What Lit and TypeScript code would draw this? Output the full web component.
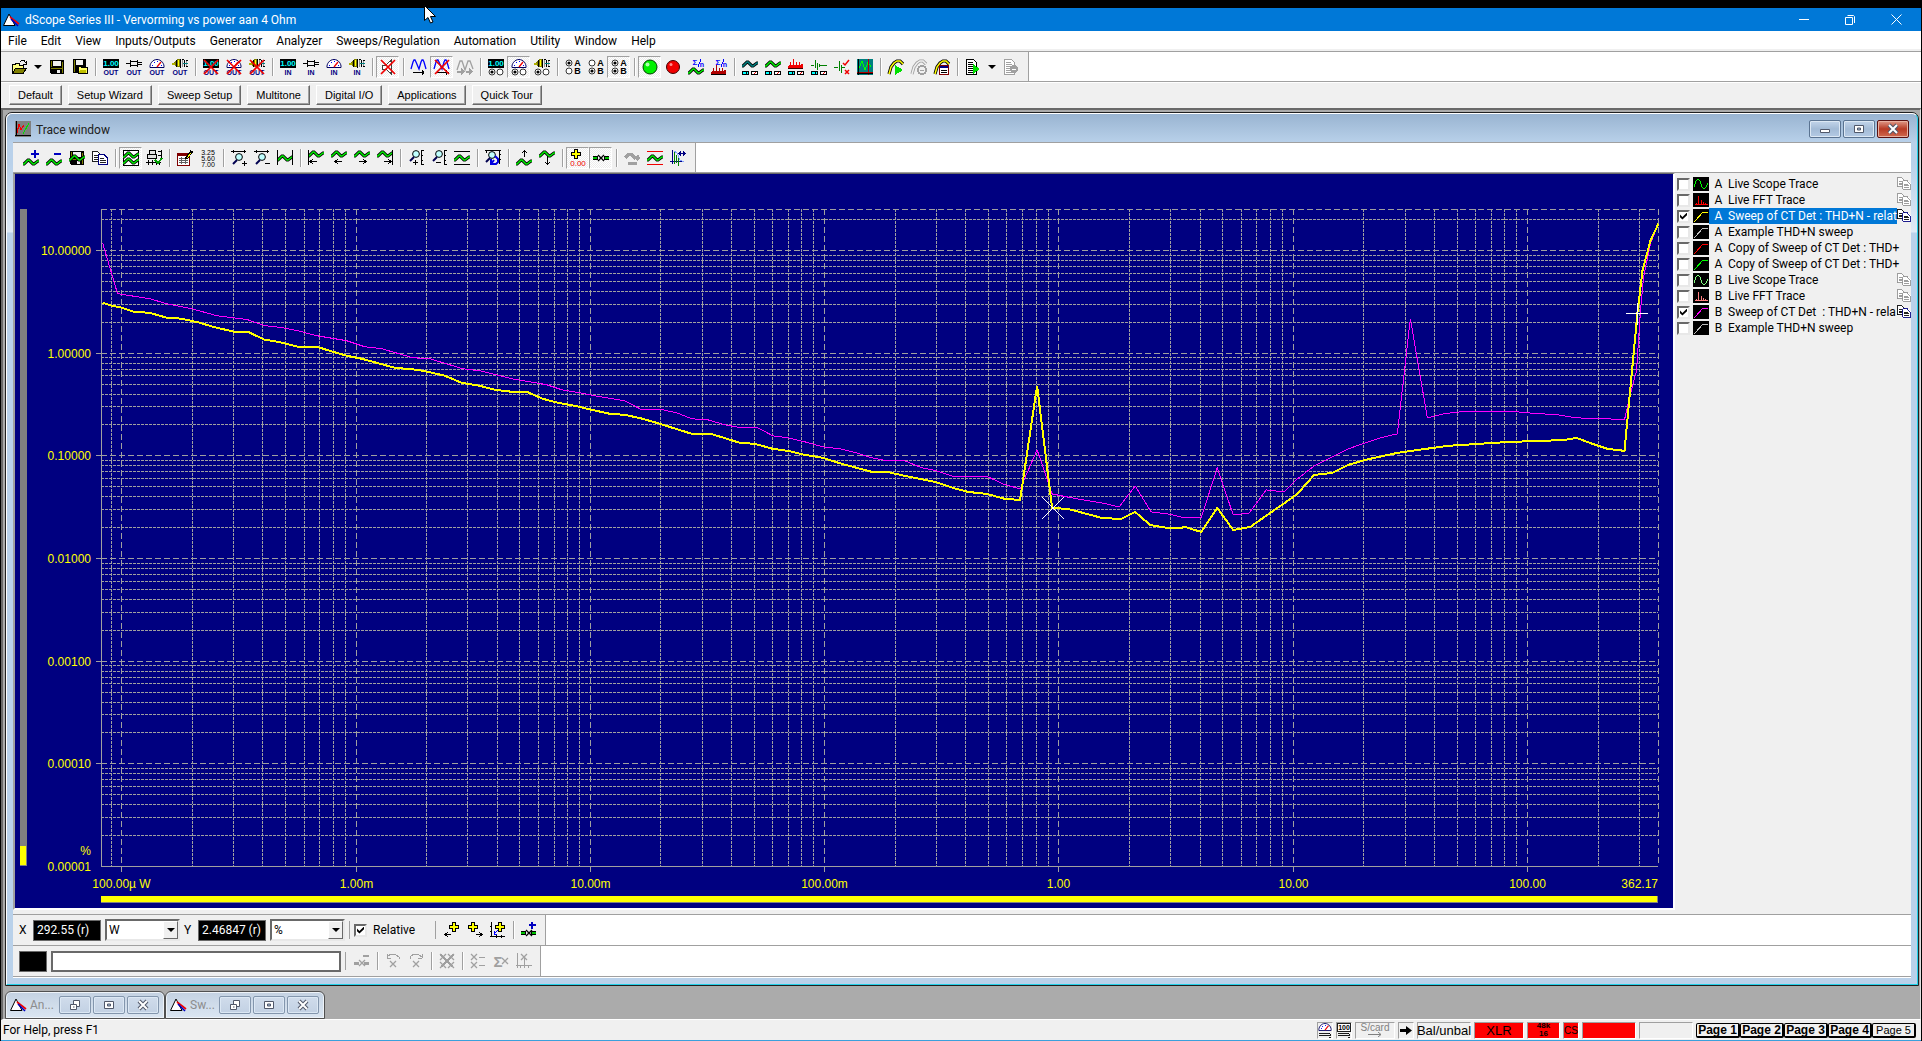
import { LitElement, html, svg, css, nothing, type TemplateResult } from "lit";
import { customElement, property, state } from "lit/decorators.js";
import { classMap } from "lit/directives/class-map.js";

type Glyph = TemplateResult;

/* ---------- icon building blocks, all on a 16 by 16 grid ---------- */

const stroke = (d: string, color: string, width = 1): Glyph =>
  svg`<path d=${d} fill="none" stroke=${color} stroke-width=${width}></path>`;
const fill = (d: string, color: string, edge = "none"): Glyph =>
  svg`<path d=${d} fill=${color} stroke=${edge}></path>`;
const word = (t: string, x: number, y: number, size: number, color: string, bold = false): Glyph =>
  svg`<text x=${x} y=${y} font-size=${size} fill=${color} text-anchor="middle"
    font-family="Liberation Sans, sans-serif" font-weight=${bold ? 700 : 400}>${t}</text>`;

const waveLine = (y: number) => `M0 ${y + 2}H1L5 ${y - 2}H6L10 ${y + 2}H11L15 ${y - 1}H16`;
const wave = (y: number, color = "#00f000"): Glyph =>
  svg`<g shape-rendering="auto">${stroke(waveLine(y), "#000", 3.2)}${stroke(waveLine(y), color, 1.5)}</g>`;
const cross = svg`<g shape-rendering="auto">${stroke("M1 1L15 15M15 1L1 15", "#f00000", 1.7)}</g>`;

const digits = svg`${fill("M0 0H16V9H0Z", "#000")}${word("1.00", 8, 7, 8, "#00ffff", true)}`;
const jack = svg`${stroke("M0 4.5H4M4.5 1V8M5 2.5H11M5 6.5H11M11.5 1V8M12 3.5H16M12 5.5H16", "#000")}`;
const gauge = svg`<g shape-rendering="auto">
  ${fill("M1 8.5C.5 5 3.500 .5 8 .5S15.500 5 15 8.5Z", "#fff", "#000060")}</g>
  ${stroke("M3 6.5H4M5 3.5H6M8 2.5H9M12 6.5H13", "#0000ff")}
  <g shape-rendering="auto">${stroke("M8 8L12 3", "#f00000", 1.3)}</g>`;
const gears = svg`
  ${fill("M2 3L5 0H8V8H5L2 6Z", "#808000")}
  ${fill("M0 4H3V6H0Z", "#b0b000")}
  ${stroke("M4.5 1V8M8.5 0V9M12.5 1V8M10 .5H12M14 1.5H16M14 7.5H16", "#000")}
  ${stroke("M6.5 1V7", "#ffff00")}
  ${stroke("M10.5 1V8M14.5 2V7", "#909090", 1)}
  ${stroke("M11 4.5H16", "#008080")}`;
const out = (g: Glyph) => svg`${g}${word("OUT", 8, 16, 7, "#000080", true)}`;
const input = (g: Glyph) => svg`${g}${word("IN", 8, 16, 7, "#000080", true)}`;

const radio = (x: number, y: number, on: boolean): Glyph => svg`
  <circle cx=${x} cy=${y} r="3" fill="#fff" stroke="#202020" stroke-width=".9" shape-rendering="auto"></circle>
  ${on ? svg`<circle cx=${x} cy=${y} r="1.6" fill="#000" shape-rendering="auto"></circle>` : nothing}`;
const abRadio = (a: boolean, b: boolean) => svg`
  ${radio(4, 4, a)}${radio(4, 12, b)}
  ${word("A", 12.5, 7, 9, "#000", true)}${word("B", 12.5, 15, 9, "#000", true)}`;
const withRadios = (g: Glyph) => svg`${g}${radio(4, 13, true)}${radio(12, 13, false)}`;

const lens = (x: number, y: number) => svg`<g shape-rendering="auto">
  <circle cx=${x} cy=${y} r="3.4" fill="#c0ffff" stroke="#000"></circle>
  ${stroke(`M${x - 2} ${y + 3}L${x - 6} ${y + 7}`, "#000050", 2)}</g>`;
const floppy = svg`
  ${fill("M1 1H15V15H2L1 14Z", "#000")}
  ${fill("M4 2H12V7H4Z", "#f0f0f0")}${fill("M2 2H3V8H2ZM13 3H14V14H13ZM2 9H14V10H2Z", "#808000")}
  ${fill("M8 11H11V14H8Z", "#f0f0f0")}`;
const copy = (ink: string, edge: string) => svg`
  ${fill("M.5 1.5H5.5L8.5 4.5V11.5H.5Z", "#fff", ink)}${stroke("M2 5.5H6M2 7.5H7M2 9.5H6", ink)}
  ${fill("M6.5 4.5H12L15.5 8V14.5H6.5Z", "#fff", edge)}${stroke("M8 8.5H12M8 10.5H14M8 12.5H14", ink)}`;
const meters = svg`
  ${fill("M.5 12.5H6.5V15.5H.5Z", "#00ffff", "#000")}
  ${fill("M9.5 12.5H15.5V15.5H9.5Z", "#fff", "#000")}${stroke("M12 15L14 13", "#f00000")}${stroke("M4.5 12V15", "#000")}`;
const star = (x: number, y: number, c: string) => svg`<g shape-rendering="auto">
  ${stroke(`M${x - 3} ${y - 3}L${x + 3} ${y + 3}M${x + 3} ${y - 3}L${x - 3} ${y + 3}`, c, 1.3)}</g>`;
const plus = (x: number, y: number) => svg`
  ${stroke(`M${x - 5} ${y}H${x + 5}M${x} ${y - 5}V${y + 5}`, "#000", 4)}
  ${stroke(`M${x - 4} ${y}H${x + 4}M${x} ${y - 4}V${y + 4}`, "#ffff00", 2)}`;
const sigmaN = svg`${word("Σ", 7, 6, 8, "#0000ff", true)}${stroke("M13 0L10 8", "#0000ff")}${word("n", 14, 8, 7, "#0000ff", true)}`;
const fft = (y: number, c: string) =>
  fill(`M0 ${y}V${y - 2}H1V${y - 3}H2V${y - 6}H3V${y - 3}H5V${y - 9}H6V${y - 3}H8V${y - 6}H9V${y - 3}H11V${y - 6}H12V${y - 3}H13V${y - 4}H15V${y}Z`, c);
const archLine = "M1 16L2 12L4 7L7 3L9 2H12L15 4M6 14L7 9L10 6H12";
const arch = (c: string, inner: string) => svg`<g shape-rendering="auto">${stroke("M1 15L3 8L6 4L9 2H12L15 5", c, 3.2)}${stroke("M1 15L3 8L6 4L9 2H12L15 5", inner, 1.5)}</g>`;
const sheet = (ink: string) => svg`
  ${fill("M1.5 .5H8.5L11.5 3.5V15.5H1.5Z", "#fff", ink)}
  ${stroke("M3 3.5H8M3 5.5H9M3 7.5H10M3 9.5H8M3 11.5H8M3 13.5H10", ink)}`;
const scope = stroke("M0 6.5H3M4.5 1V9M6.5 4V11M8.5 5V8M9 6.5H16", "#008000");
const GREY = "#a0a0a0";

const ICONS: Record<string, Glyph> = {
  open: svg`${fill("M1.5 14.5V5.5H4L5 4.5H8L9 6.5H12.5V14.5Z", "#ffff80", "#000")}
    ${fill("M1.5 14.5L4.5 9.5H15.5L12 14.5Z", "#808000", "#000")}${stroke("M9 2.5L11 1.5H13L15 4M15.5 2V5H12", "#000")}`,
  save: floppy,
  saveOpen: svg`${fill("M1 0H14V14H1Z", "#000")}${fill("M4 1H11V6H4Z", "#f0f0f0")}${fill("M2 1H3V13H2Z", "#808000")}
    ${fill("M6.5 14.5V7.5H9L10 8.5H15.5V14.5Z", "#ffff60", "#000")}${fill("M8 11H14V14H7Z", "#c0c000")}`,
  digitsOut: out(digits), jackOut: out(jack), gaugeOut: out(gauge), gearsOut: out(gears),
  digitsOff: svg`${out(digits)}${cross}`, gaugeOff: svg`${out(gauge)}${cross}`, gearsOff: svg`${out(gears)}${cross}`,
  digitsIn: input(digits), jackIn: input(jack), gaugeIn: input(gauge), gearsIn: input(gears),
  speaker: svg`${fill("M2.5 6V10H6L11.5 15V1L6 6Z", "#fff", "#404040")}${cross}`,
  sine: svg`<g shape-rendering="auto">${stroke("M0 10L2 3L3 1H4L5 3L8 10L10 3L11 1H12L13 3L15 10", "#0000ff", 1.3)}</g>${stroke("M2 13.5H13M11 11V16M12 12V15", "#000")}`,
  sineOff: svg`<g shape-rendering="auto">${stroke("M0 10L2 3L3 1H4L5 3L8 10L10 3L11 1H12L13 3L15 10", "#0000ff", 1.3)}</g>${stroke("M2 13.5H15M12 11V16", "#000")}${cross}`,
  sinePair: svg`<g shape-rendering="auto">${stroke("M0 11L3 2H5L8 11L11 2H13L16 10", GREY, 1.3)}</g>${fill("M0 12H4V9L8 13L4 16V14H0ZM9 12H12V9L16 13L12 16V14H9Z", GREY)}`,
  digitsSel: withRadios(digits), gaugeSel: withRadios(gauge), gearsSel: withRadios(gears),
  chanA: abRadio(true, false), chanB: abRadio(false, true), chanAB: abRadio(true, true),
  green: svg`<circle cx="8" cy="8" r="7" fill="#00f000" stroke="#004000" shape-rendering="auto"></circle>
    <circle cx="5.5" cy="5.5" r="2" fill="#b0ffb0" shape-rendering="auto"></circle>`,
  red: svg`<circle cx="8" cy="8" r="6.500" fill="#f00000" stroke="#400000" shape-rendering="auto"></circle>
    <circle cx="6" cy="5.5" r="1.500" fill="#ff9090" shape-rendering="auto"></circle>`,
  sumWave: svg`${wave(12)}${sigmaN}`,
  sumFft: svg`${fft(16, "#000")}${fft(15, "#b00000")}${sigmaN}`,
  traceTeal: svg`${wave(5, "#008080")}${meters}`,
  traceGreen: svg`${wave(5)}${meters}`,
  traceFft: svg`${fft(9, "#f00000")}${stroke("M0 9.5H15", "#400000")}${meters}`,
  traceScope: svg`${scope}${meters}`,
  limits: svg`${stroke("M0 8.5H4M5.5 2V12M7.5 6V14M8 8.5H11", "#008000")}<g shape-rendering="auto">${stroke("M9 4L11 6L15 1M11 11L15 15M15 11L11 15", "#f00000", 1.5)}</g>`,
  traceWin: svg`${fill("M0 0H16V16H0Z", "#008080")}${stroke("M2 9L5 2L8 11L11 3L14 8", "#00ff00")}${stroke("M11.5 0V16M0 13.5H16", "#b00000")}${stroke("M1.5 0V16M0 14.5H16", "#000")}`,
  run: svg`${arch("#000", "#ffff00")}${fill("M7 6L15 11L7 16Z", "#00e000")}`,
  stop: svg`${arch(GREY, "#f0f0f0")}<circle cx="11" cy="11" r="4" fill="#f0f0f0" stroke=${GREY} stroke-width="2"></circle>${stroke("M9 11.5H13", GREY)}`,
  script: svg`${arch("#000", "#ffff00")}${fill("M5.5 6.5H14.5V15.5H5.5Z", "#fff", "#800000")}${fill("M6 7H14V9H6Z", "#000080")}${stroke("M7 11.5H13M7 13.5H13", "#000")}`,
  report: svg`${sheet("#000")}${fill("M8 5L15 10L8 15Z", "#00e000")}`,
  reportOff: svg`${sheet(GREY)}<circle cx="11" cy="10" r="4" fill=${GREY}></circle>${stroke("M9 10.5H13", "#fff")}`,

  addWave: svg`${wave(12)}${stroke("M12 0V8M8 4H16", "#0000c0", 2)}`,
  delWave: svg`${wave(12)}${stroke("M8 4H15", "#0000c0", 2)}`,
  saveWave: svg`${floppy}${wave(8)}`,
  copy: copy("#202020", "#000080"),
  overlay: svg`${fill("M.5 .5H15.5V15.5H.5Z", "#fff", "#000")}${wave(5)}${wave(11)}`,
  print: svg`${fill("M3.5 4V.5H9.5V4M1 4.5H10.5V8.5H1Z", "#e0e0e0", "#000")}${stroke("M12 1.5H16M12 5.5H16M15.5 0V10M0 12.5H15M2.5 10V15M6.5 10V15M10.5 10V15M13.5 10V15", "#000")}${stroke("M9 10L12 13L16 8", "#00a000", 2)}`,
  table: svg`${fill("M.5 3.5H12.5V15.5H.5Z", "#fff", "#800000")}${fill("M0 3H13V6H0Z", "#800000")}${stroke("M2 8.5H11M2 10.5H11M2 12.5H11M4.5 7V14M8.5 7V14", "#606060")}${stroke("M9 9L15 1", "#000", 3)}${stroke("M10 8L14 3", "#ffff00")}`,
  numbers: svg`${word("3.25", 8, 5, 7, "#000")}${word("5.60", 8, 11, 7, "#000")}${word("7.00", 8, 17, 7, "#000")}`,
  zoomXIn: svg`${stroke("M0 1.5H15M2.5 0V3M13.5 0V3", "#000")}${lens(8, 7)}${stroke("M11 13.5H16M13.5 11V16", "#000")}`,
  zoomXOut: svg`${stroke("M0 1.5H15M2.5 0V3M13.5 0V3", "#000")}${lens(8, 7)}${stroke("M11 13.5H16", "#000")}`,
  fitX: svg`${wave(8)}${stroke("M.5 0V15M15.5 0V15", "#000")}`,
  goStart: svg`${wave(4)}${stroke("M.5 0V15M2 11.5H9M5 9L2 11.5L5 14", "#000")}`,
  goLeft: svg`${wave(4)}${stroke("M4 11.5H11M7 9L4 11.5L7 14", "#000")}`,
  goRight: svg`${wave(4)}${stroke("M5 11.5H12M9 9L12 11.5L9 14", "#000")}`,
  goEnd: svg`${wave(4)}${stroke("M15.5 0V15M7 11.5H14M11 9L14 11.5L11 14", "#000")}`,
  zoomYIn: svg`${lens(8, 4)}${stroke("M16 .5H13.5V14.5H16M13 5.5H15M13 10.5H15M5 12.5H10M7.5 10V15", "#000")}`,
  zoomYOut: svg`${lens(8, 4)}${stroke("M16 .5H13.5V14.5H16M13 5.5H15M13 10.5H15M5 12.5H10", "#000")}`,
  fitY: svg`${stroke("M0 1.5H16M0 14.5H16", "#000")}${wave(8)}`,
  unzoom: svg`${stroke("M0 .5H16M1.5 0V3M14.5 0V14M14 4.5H16M14 9.5H16", "#000")}${lens(7, 5)}<g shape-rendering="auto">${stroke("M6 9V14H11L13 12V9L10 6M6 14L9 10", "#0000e0", 2)}</g>`,
  shiftUp: svg`${wave(12)}${stroke("M8.5 0V7M6 3L8.5 1L11 3", "#000")}`,
  shiftDown: svg`${wave(4)}${stroke("M8.5 6V15M6 12L8.5 14L11 12", "#000")}`,
  readout: svg`${plus(6, 4)}${word("0.00", 8, 16, 8, "#f00000")}`,
  markers: svg`${stroke("M0 8H5M11 8H16", "#000", 4)}${stroke("M0 8H4M12 8H16", "#00c000", 2)}${star(8, 8, "#000")}`,
  link: svg`${stroke("M1 8L5 4H7L11 8L15 6M4 13H13M12 10L15 7", GREY, 3)}`,
  band: svg`${stroke("M0 1.5H16M0 14.5H16", "#f00000")}${wave(8)}`,
  windowed: svg`${stroke("M2.5 0V14M0 11.5H13", "#000080")}${stroke("M4.5 2V14M6.5 5V13M8.5 8V16", "#008000")}${stroke("M4 1L7 3L10 10L14 12", "#80a0ff")}${stroke("M8 3.5H16M9.5 2V5M10.5 1V6M13.5 1V6M14.5 2V5", "#000080")}`,

  curLeft: svg`${plus(10, 5)}${stroke("M1 12.5H7M4 10L1 12.5L4 15", "#000")}`,
  curRight: svg`${plus(6, 5)}${stroke("M9 12.5H15M12 10L15 12.5L12 15", "#000")}`,
  curSet: svg`${stroke("M1.5 0V15M0 14.5H15M0 4.5H2M0 9.5H2M6.5 13V16M11.5 13V16", "#000")}${plus(10, 5)}${stroke("M8 8L4 12M4 9V12H7", "#0000ff")}`,
  curMark: svg`${stroke("M11 0V7M8 3H15", "#0000c0", 2)}${stroke("M0 11H5M10 11H15", "#000", 4)}${stroke("M0 11H4M11 11H15", "#00c000", 2)}${star(8, 11, "#000")}`,
  mDel: svg`${stroke("M9 3H15", GREY, 2)}${stroke("M0 10H5M10 10H15", GREY, 3)}${star(8, 10, GREY)}`,
  mUndo: svg`${stroke("M2 5V1M2 5H6M2 4L6 1H10L14 4V6", GREY)}${star(8, 11, GREY)}`,
  mRedo: svg`${stroke("M14 5V1M14 5H10M14 4L10 1H6L2 4V6", GREY)}${star(8, 11, GREY)}`,
  mClear: svg`${star(4, 4, GREY)}${star(12, 4, GREY)}${star(4, 12, GREY)}${star(12, 12, GREY)}${stroke("M2 2L14 14M14 2L2 14", GREY, 2)}`,
  mList: svg`${star(4, 4, GREY)}${star(4, 12, GREY)}${stroke("M9 4.5H15M9 12.5H15", GREY)}`,
  mSum: svg`${word("Σ", 5, 14, 15, GREY, true)}${star(12, 8, GREY)}`,
  mAxis: svg`${stroke("M1.5 0V15M0 12.5H16M8.5 5V15M4.5 12V15M12.5 12V15", GREY)}${star(8, 4, GREY)}`,

  app: svg`<g shape-rendering="auto">${fill("M0.500 13.5L6 2L12 13.5Z", "#fff", "#000")}${stroke("M7 5L16 12", "#f00000", 1.6)}${stroke("M8 7L15 14", "#0000c0", 1.6)}</g>`,
  trace: svg`${fill("M0 0H16V16H0Z", "#808080")}${stroke("M2 12L4 3L6 9L9 4", "#f00000", 1)}${stroke("M8 13L14 2", "#00e000", 1)}${stroke("M1.5 0V15M0 14.5H16", "#000")}`,
};

const icon = (name: string): TemplateResult =>
  html`<svg class="ico" width="16" height="16" viewBox="0 0 16 16" shape-rendering="crispEdges" aria-hidden="true">${ICONS[name]}</svg>`;

type Tool = { id: string; label: string; on?: boolean; off?: boolean; menu?: boolean };
const t = (id: string, label: string, mode = ""): Tool => ({
  id, label, on: mode === "on", off: mode === "off", menu: mode === "menu",
});

const MAIN_TOOLS: Tool[][] = [
  [t("open", "Open", "menu"), t("save", "Save"), t("saveOpen", "Save as")],
  [t("digitsOut", "Output readings"), t("jackOut", "Outputs"), t("gaugeOut", "Output meters"), t("gearsOut", "Output setup")],
  [t("digitsOff", "Close readings"), t("gaugeOff", "Close meters"), t("gearsOff", "Close setup")],
  [t("digitsIn", "Input readings"), t("jackIn", "Inputs"), t("gaugeIn", "Input meters"), t("gearsIn", "Input setup")],
  [t("speaker", "Mute", "on")],
  [t("sine", "Generator"), t("sineOff", "Generator off", "on"), t("sinePair", "Both generators", "off")],
  [t("digitsSel", "Reading source"), t("gaugeSel", "Meter source", "on"), t("gearsSel", "Setup source")],
  [t("chanA", "Channel A"), t("chanB", "Channel B"), t("chanAB", "Channels A and B", "on")],
  [t("green", "Run", "on"), t("red", "Halt"), t("sumWave", "Average scope"), t("sumFft", "Average FFT")],
  [t("traceTeal", "Analyzer"), t("traceGreen", "Scope"), t("traceFft", "FFT"), t("traceScope", "Detector"), t("limits", "Limits"), t("traceWin", "Traces")],
  [t("run", "Run sweep"), t("stop", "Stop sweep", "off"), t("script", "Sweep setup")],
  [t("report", "Run script", "menu"), t("reportOff", "Stop script", "off")],
];

const TRACE_TOOLS: Tool[][] = [
  [t("addWave", "Add trace"), t("delWave", "Remove trace"), t("saveWave", "Save trace"), t("copy", "Copy trace")],
  [t("overlay", "Overlay", "on"), t("print", "Print")],
  [t("table", "Edit"), t("numbers", "Values")],
  [t("zoomXIn", "Zoom in X"), t("zoomXOut", "Zoom out X"), t("fitX", "Fit X")],
  [t("goStart", "Start"), t("goLeft", "Left"), t("goRight", "Right"), t("goEnd", "End")],
  [t("zoomYIn", "Zoom in Y"), t("zoomYOut", "Zoom out Y"), t("fitY", "Fit Y")],
  [t("unzoom", "Undo zoom")],
  [t("shiftUp", "Shift up"), t("shiftDown", "Shift down")],
  [t("readout", "Cursor", "on"), t("markers", "Marks", "on")],
  [t("link", "Link", "off"), t("band", "Limit lines"), t("windowed", "Window")],
];

const CURSOR_TOOLS: Tool[][] = [
  [t("curLeft", "Cursor left"), t("curRight", "Cursor right"), t("curSet", "Cursor to axes")],
  [t("curMark", "Add mark")],
];

const MARK_TOOLS: Tool[][] = [
  [t("mDel", "Delete mark", "off")],
  [t("mUndo", "Previous mark", "off"), t("mRedo", "Next mark", "off")],
  [t("mClear", "Clear marks", "off")],
  [t("mList", "List marks", "off"), t("mSum", "Sum marks", "off"), t("mAxis", "Mark axis", "off")],
];

@customElement("tool-strip")
class ToolStrip extends LitElement {
  @property({ attribute: false }) groups: Tool[][] = [];

  static styles = css`
    :host { display: flex; align-items: center; }
    .group { display: flex; align-items: center; }
    .group + .group::before {
      content: ""; width: 1px; height: 18px; margin: 0 3px 0 4px;
      background: #a0a0a0; box-shadow: 1px 0 #fff;
    }
    button {
      box-sizing: border-box; width: 23px; height: 22px; padding: 0; border: 1px solid transparent;
      background: none; display: flex; align-items: center; justify-content: center;
    }
    button.on {
      border-color: #a0a0a0 #fff #fff #a0a0a0;
      background: repeating-conic-gradient(#fff 0 25%, #ececec 0 50%) 0 0 / 2px 2px;
    }
    .ico { display: block; overflow: visible; }
    .menu { width: 15px; }
    .menu::after { content: ""; border: 4px solid transparent; border-top-color: #000; border-bottom: 0; }
  `;

  render() {
    return this.groups.map(
      (g) => html`<div class="group">${g.map(
        (b) => html`<button type="button" class=${classMap({ on: !!b.on })} aria-label=${b.label} ?disabled=${b.off}>${icon(b.id)}</button>
          ${b.menu ? html`<button type="button" class="menu" aria-label=${b.label + " list"}></button>` : nothing}`,
      )}</div>`,
    );
  }
}

/* ---------- plot ---------- */

const SPAN_X = 1556;
const SPAN_Y = 656;
const X_MIN = -4.0867;
const X_MAX = 2.5589;
const Y_MIN = -5;
const Y_MAX = 1.4;

const TRACE_A =
  "1,93 10,96 20,98 32,102 45,103 51,104 65,108 80,109 98,113 111,117 132,122 146,122 163,130 176,132 196,137 215,137 231,142 245,146 260,149 293,158 315,160 326,162 343,166 360,173 378,176 393,180 410,182 425,182 441,189 456,193 473,196 490,200 508,204 523,205 541,209 558,214 590,224 609,224 638,233 653,234 671,239 686,241 703,245 721,248 740,254 770,262 785,262 803,266 818,269 833,272 851,278 866,282 885,284 903,289 918,290 935,176 950,298 966,299 1000,308 1019,309 1033,302 1048,315 1066,318 1078,318 1083,317 1099,322 1115,298 1131,320 1148,317 1165,305 1181,294 1195,284 1212,265 1230,263 1246,255 1263,250 1295,243 1345,236 1408,232 1441,231 1463,230 1474,228 1490,234 1505,239 1522,241 1535,103 1540,61 1548,31 1556,14";
const TRACE_B =
  "1,33 16,84 22,85 35,87 48,89 65,94 90,99 115,106 131,108 146,110 163,116 181,118 196,121 215,126 245,131 263,137 280,139 311,148 328,149 361,159 378,161 410,169 428,172 445,175 460,180 478,183 493,186 523,191 540,200 561,200 575,203 590,209 606,210 623,215 640,218 656,218 671,226 686,228 703,232 721,237 738,239 755,243 770,248 786,251 803,251 820,258 835,261 853,267 886,267 901,274 918,279 935,240 950,284 965,287 981,290 1000,293 1017,297 1033,276 1049,302 1066,304 1083,308 1099,308 1115,258 1131,305 1147,303 1164,280 1182,282 1195,269 1212,256 1246,239 1263,233 1278,228 1295,224 1308,109 1325,208 1341,204 1358,202 1390,202 1415,202 1425,203 1455,205 1473,208 1505,209 1522,210 1528,184 1534,161 1538,101 1541,68 1548,34 1556,14";

const X_LABELS: [number, string][] = [
  [-4, "100.00µ W"], [-3, "1.00m"], [-2, "10.00m"], [-1, "100.00m"], [0, "1.00"], [1, "10.00"], [2, "100.00"],
];
const Y_LABELS: [number, string][] = [
  [1, "10.00000"], [0, "1.00000"], [-1, "0.10000"], [-2, "0.01000"], [-3, "0.00100"], [-4, "0.00010"], [-5, "0.00001"],
];

@customElement("trace-plot")
class TracePlot extends LitElement {
  @state() private w = 1657;
  @state() private h = 733;
  private observer = new ResizeObserver(([e]) => {
    this.w = Math.round(e.contentRect.width);
    this.h = Math.round(e.contentRect.height);
  });

  static styles = css`
    :host { display: block; flex: 1; min-width: 0; min-height: 0; overflow: hidden; contain: size; background: #000080; }
    svg { display: block; width: 100%; height: 100%; }
    text { font: 12px "Liberation Sans", Arial, sans-serif; fill: #ffff00; }
    .minor { fill: none; stroke: #a0a0a0; stroke-dasharray: 3 1; }
    .major { fill: none; stroke: #a0a0a0; stroke-dasharray: 6 3; }
    .axis { fill: none; stroke: #a0a0a0; }
    .a { fill: none; stroke: #ffff00; stroke-width: 2; }
    .b { fill: none; stroke: #ff00ff; }
    .mark { fill: none; stroke: #fff; }
  `;

  connectedCallback() {
    super.connectedCallback();
    this.observer.observe(this);
  }
  disconnectedCallback() {
    this.observer.disconnect();
    super.disconnectedCallback();
  }

  render() {
    const left = 86, top = 35;
    const right = this.w - 15, bottom = this.h - 42;
    const px = (lg: number) => Math.round(left + ((lg - X_MIN) / (X_MAX - X_MIN)) * (right - left)) + 0.5;
    const py = (lg: number) => Math.round(bottom - ((lg - Y_MIN) / (Y_MAX - Y_MIN)) * (bottom - top)) + 0.5;
    const at = (u: number, v: number): [number, number] => [
      left + 0.5 + (u / SPAN_X) * (right - left),
      top + 0.5 + (v / SPAN_Y) * (bottom - top),
    ];
    const line = (pts: string) =>
      pts.split(" ").map((p) => { const [u, v] = p.split(",").map(Number); return at(u, v).join(","); }).join(" ");

    let minor = "", major = "";
    for (let d = -5; d <= 2; d++)
      for (let n = 1; n <= 9; n++) {
        const lg = d + Math.log10(n);
        if (lg > X_MIN && lg < X_MAX) {
          const end = n === 1 ? bottom + 6 : bottom;
          const seg = `M${px(lg)} ${top}V${end}`;
          if (n === 1) major += seg; else minor += seg;
        }
        if (lg > Y_MIN && lg < Y_MAX) {
          const seg = `M${left} ${py(lg)}H${right}`;
          if (n === 1) major += seg; else minor += seg;
        }
      }
    major += `M${left} ${top + 0.5}H${right}M${right + 0.5} ${top}V${bottom}`;
    const ticks = Y_LABELS.slice(0, -1).map(([lg]) => `M${left - 5} ${py(lg)}H${left}`).join("");
    const [mx, my] = at(951, 298);
    const [cx, cy] = at(1535, 104);

    return html`<svg role="img" aria-label="THD+N against power">
      <g shape-rendering="crispEdges">
        <rect x="5" y=${top} width="7" height=${bottom - top} fill="#808080"></rect>
        <rect x="5" y=${bottom - 20} width="6" height="19" fill="#ffff00"></rect>
        <rect x=${left} y=${this.h - 12} width=${right - left} height="7" fill="#808080"></rect>
        <rect x=${left} y=${this.h - 12} width=${right - left - 1} height="6" fill="#ffff00"></rect>
        <path class="minor" d=${minor}></path>
        <path class="major" d=${major}></path>
        <path class="axis" d=${`M${left + 0.5} ${top}V${bottom + 0.5}H${right}${ticks}`}></path>
        <polyline class="b" points=${line(TRACE_B)}></polyline>
        <polyline class="a" points=${line(TRACE_A)}></polyline>
        <path class="mark" d=${`M${mx - 11} ${my - 11}l22 22M${mx + 11} ${my - 11}l-22 22`}></path>
        <path class="mark" d=${`M${cx - 11} ${cy}h22M${cx} ${cy - 11}v22`}></path>
      </g>
      ${Y_LABELS.map(([lg, s]) => svg`<text x=${left - 10} y=${py(lg) + 4} text-anchor="end">${s}</text>`)}
      <text x=${left - 10} y=${bottom - 11} text-anchor="end">%</text>
      ${X_LABELS.map(([lg, s]) => svg`<text x=${px(lg)} y=${bottom + 22} text-anchor="middle">${s}</text>`)}
      <text x=${right} y=${bottom + 22} text-anchor="end">362.17</text>
    </svg>`;
  }
}

/* ---------- trace list ---------- */

type Trace = { ch: string; name: string; kind: "wave" | "fft" | "sweep"; color: string; shown?: boolean; copy?: "off" | "on"; picked?: boolean };
const TRACES: Trace[] = [
  { ch: "A", name: "Live Scope Trace", kind: "wave", color: "#00ff00", copy: "off" },
  { ch: "A", name: "Live FFT Trace", kind: "fft", color: "#ff0000", copy: "off" },
  { ch: "A", name: "Sweep of CT Det : THD+N - relat", kind: "sweep", color: "#ffff00", shown: true, copy: "on", picked: true },
  { ch: "A", name: "Example THD+N sweep", kind: "sweep", color: "#c0c0c0" },
  { ch: "A", name: "Copy of Sweep of CT Det : THD+", kind: "sweep", color: "#ff0000" },
  { ch: "A", name: "Copy of Sweep of CT Det : THD+", kind: "sweep", color: "#00ff00" },
  { ch: "B", name: "Live Scope Trace", kind: "wave", color: "#80ff80", copy: "off" },
  { ch: "B", name: "Live FFT Trace", kind: "fft", color: "#ff8080", copy: "off" },
  { ch: "B", name: "Sweep of CT Det  : THD+N - rela", kind: "sweep", color: "#ff00ff", shown: true, copy: "on" },
  { ch: "B", name: "Example THD+N sweep", kind: "sweep", color: "#c0c0c0" },
];
const SWATCH = {
  wave: "M1 10L3 4L5 2L7 4L9 10L11 12L13 10L15 6",
  fft: "M2 11.5H15M3.5 10V12M5.5 3V12M8.5 7V12M10.5 9V12M12.5 10V12",
  sweep: "M1 12H2L10 3H15",
};

@customElement("trace-list")
class TraceList extends LitElement {
  static styles = css`
    :host { display: block; flex: none; width: 236px; box-sizing: border-box; padding: 3px 0 0 2px; background: #f0f0f0; }
    ul { list-style: none; margin: 0; padding: 0; }
    li { display: flex; align-items: center; height: 16px; font: 12px/16px var(--ui); white-space: pre; }
    input {
      appearance: none; box-sizing: border-box; flex: none; width: 13px; height: 13px; margin: 0 3px 0 0;
      background: #fff; border: 2px solid; border-color: #696969 #e8e8e8 #e8e8e8 #696969;
      display: grid; place-items: center;
    }
    input:checked::before { content: ""; width: 7px; height: 7px; background: #000; clip-path: polygon(0 30%, 35% 65%, 100% 0, 100% 38%, 35% 100%, 0 68%); }
    label { display: flex; flex: 1; min-width: 0; }
    .picked label { background: #0078d7; color: #fff; }
    .swatch { flex: none; display: block; background: #000; border: solid #f0f0f0; border-width: 1px 0; height: 14px; }
    .ch { flex: none; width: 19px; text-align: center; }
    .end { flex: none; width: 14px; height: 16px; }
    .end svg { display: block; margin-top: 1px; }
  `;

  render() {
    return html`<ul>${TRACES.map(
      (r, i) => html`<li class=${classMap({ picked: !!r.picked })}>
        <input type="checkbox" id=${"t" + i} ?checked=${r.shown} /><label for=${"t" + i}><svg class="swatch" width="16" height="14" viewBox="0 0 16 14" shape-rendering="crispEdges" aria-hidden="true">${stroke(SWATCH[r.kind], r.color)}</svg><span class="ch">${r.ch}</span><span>${r.name}</span></label>
        <span class="end">${r.copy
          ? html`<svg width="14" height="14" viewBox="0 1 16 15" shape-rendering="crispEdges" aria-hidden="true">${r.copy === "on" ? copy("#000", "#000080") : copy("#909090", "#909090")}</svg>`
          : nothing}</span>
      </li>`,
    )}</ul>`;
  }
}

/* ---------- page ---------- */

const glyph = (kind: string) => html`<svg class="cap" width="14" height="12" viewBox="0 0 14 12" aria-hidden="true">${
  kind === "min" ? fill("M2.5 6.5H11.5V9.5H2.5Z", "#fff", "#50586a")
  : kind === "max" ? svg`${fill("M2.5 2.5H11.5V9.5H2.5Z", "#fff", "#50586a")}${fill("M5.5 5H8.5V7H5.5Z", "#9db4d0", "#50586a")}`
  : kind === "restore" ? svg`${fill("M5.5 1.5H11.5V7.5H5.5Z", "#fff", "#50586a")}${fill("M2.5 5.5H8.5V10.5H2.5Z", "#fff", "#50586a")}${fill("M5 7.5H6.5V8.5H5Z", "#50586a")}`
  : svg`${stroke("M3 2L11 10M11 2L3 10", "#50586a", 4)}${stroke("M3 2L11 10M11 2L3 10", "#fff", 2)}`
}</svg>`;

@customElement("app-root")
class AppRoot extends LitElement {
  static styles = css`
    :host {
      --ui: Roboto, "Open Sans", sans-serif;
      display: flex; flex-direction: column; height: 100vh; box-sizing: border-box;
      border: solid #000; border-width: 8px 1px 0; background: #f0f0f0; color: #000;
      font: 12px/16px var(--ui); overflow: hidden;
    }
    button { font: inherit; color: inherit; padding: 0; border: 0; background: none; }
    .ico { display: block; overflow: visible; flex: none; }

    .title { flex: none; height: 23px; display: flex; align-items: center; background: #0078d7; color: #fff; padding: 0 2px; }
    .title h1 { flex: 1; margin: 0 0 0 6px; font: inherit; }
    .title button { width: 46px; height: 23px; display: grid; place-items: center; }
    .pointer { position: absolute; left: 424px; top: 5px; }

    .menu { flex: none; display: flex; gap: 14px; height: 17px; padding: 1px 7px 0; background: #fff; border-bottom: 2px solid #f0f0f0; }
    .bar { flex: none; display: flex; background: #fff; border-top: 1px solid #a0a0a0; }
    .bar tool-strip { height: 29px; padding: 0 6px; background: #f0f0f0; border-right: 1px solid #a0a0a0; }
    .pages { flex: none; display: flex; gap: 6px; padding: 3px 8px; border-top: 1px solid #a0a0a0; box-shadow: inset 0 1px #fff; }
    .pages button {
      height: 20px; padding: 0 8px; border: 1px solid; border-color: #fff #696969 #696969 #fff;
      box-shadow: inset -1px -1px #a0a0a0; font: 11px/16px "Liberation Sans", Arial, sans-serif;
    }

    .desk {
      flex: 1; min-height: 0; display: flex; flex-direction: column; background: #ababab;
      border: solid; border-width: 2px 1px 1px 2px; border-color: #696969 #e0e0e0 #fff #696969; padding: 2px 1px 0 2px;
    }
    .win { flex: 1; min-height: 0; display: flex; border: 1px solid #202020; border-radius: 7px 7px 0 0; }
    .frame {
      flex: 1; min-width: 0; display: flex; flex-direction: column; padding: 0 6px 6px;
      border: 1px solid; border-color: #fff #22d0e8 #22d0e8 #fff; border-radius: 6px 6px 0 0;
      background: linear-gradient(#99b4d1 0, #b9d1ea 29px, #b9d1ea 50px, #dfeaf6 118px, #b9d1ea 119px);
    }
    .caption { flex: none; height: 28px; display: flex; align-items: center; padding: 2px 2px 0; box-sizing: border-box; }
    .caption h2 { flex: 1; margin: 1px 0 0 5px; font: inherit; color: #202020; }
    .caption button, .mini button {
      box-sizing: border-box; height: 18px; width: 32px; margin-left: 2px; display: grid; place-items: center;
      border: 1px solid #5a7391; border-radius: 2px; background: linear-gradient(#c3d5ea, #a3bbd6 50%, #b4cae4); box-shadow: inset 0 0 0 1px #dce8f4;
    }
    .caption button.close { border-color: #5a1010; background: linear-gradient(#e09a88, #b83a24 50%, #d06a50); box-shadow: inset 0 0 0 1px #e8b0a0; }
    .body { flex: 1; min-height: 0; display: flex; border-top: 1px solid #a0a0a0; }
    .well { flex: 1; min-width: 0; display: flex; border: solid; border-width: 1px 2px 2px; border-color: #696969 #fff #fff #a0a0a0; }
    .gap { flex: none; height: 4px; background: #f0f0f0; }
    .foot { flex: none; height: 1px; background: #a0a0a0; border-bottom: 1px solid #fff; }

    .edit { height: 30px; display: flex; align-items: center; background: #f0f0f0; border-right: 1px solid #a0a0a0; padding: 0 5px 0 6px; gap: 4px; }
    .edit tool-strip { height: 29px; padding: 0; border: 0; }
    .edit .axis { width: 10px; }
    .edit input:not([type="checkbox"]) {
      box-sizing: border-box; height: 21px; margin: 0; padding: 0 3px; border: 1px solid #696969; border-radius: 0;
      font: 12px/16px var(--ui); background: #fff;
    }
    .edit input.dark { width: 68px; background: #000; color: #fff; }
    .edit input.chip { width: 28px; background: #000; }
    .edit input.note { width: 290px; border-width: 2px; }
    .rule { width: 1px; height: 18px; background: #a0a0a0; }
    .combo { display: grid; width: 75px; height: 22px; box-sizing: border-box; border: 2px solid; border-color: #696969 #e8e8e8 #e8e8e8 #696969; background: #fff; }
    .combo > * { grid-area: 1 / 1; }
    .combo select { appearance: none; border: 0; background: none; padding: 0 2px; font: 12px/16px var(--ui); min-width: 0; border-radius: 0; }
    .combo span { justify-self: end; width: 15px; box-sizing: border-box; background: #f0f0f0; border: 1px solid; border-color: #fff #696969 #696969 #fff; pointer-events: none; display: grid; place-items: center; }
    .combo span::before { content: ""; border: 4px solid transparent; border-top-color: #000; border-bottom: 0; }
    .check { display: flex; align-items: center; gap: 6px; margin-right: 16px; }
    .check input {
      appearance: none; box-sizing: border-box; width: 13px; height: 13px; margin: 0; background: #fff;
      border: 2px solid; border-color: #696969 #e8e8e8 #e8e8e8 #696969; display: grid; place-items: center;
    }
    .check input:checked::before { content: ""; width: 7px; height: 7px; background: #000; clip-path: polygon(0 30%, 35% 65%, 100% 0, 100% 38%, 35% 100%, 0 68%); }

    .minis { flex: none; display: flex; padding-top: 5px; }
    .mini {
      display: flex; align-items: center; box-sizing: border-box; width: 160px; height: 28px; padding: 0 5px 0 4px;
      border: 1px solid #505050; border-radius: 6px 6px 0 0; background: linear-gradient(#c4d2e2, #dbe6f2); box-shadow: inset 0 0 0 1px #eef3f8; color: #8c8c8c;
    }
    .mini span { flex: 1; margin-left: 4px; }
    .mini button { border-color: #8396ad; background: linear-gradient(#d0dceb, #c2d1e3); }

    .status { flex: none; display: flex; align-items: center; gap: 3px; height: 20px; padding: 0 5px 0 2px; border-bottom: 1px solid #3aa0dc; }
    .status p { flex: 1; margin: 0; }
    .cell { box-sizing: border-box; height: 17px; border: 1px solid; border-color: #a0a0a0 #fff #fff #a0a0a0; display: flex; align-items: center; justify-content: center; font: 13px/15px "Liberation Sans", Arial, sans-serif; }
    .w16 { width: 16px; }
    .w40 { width: 40px; }
    .w50 { width: 50px; }
    .w54 { width: 54px; }
    .small { font-size: 10px; color: #808080; flex-direction: column; line-height: 9px; }
    .hot { background: #ff0000; }
    .cs { font-size: 10px; }
    .rate { width: 33px; font: bold 8px/8px "Liberation Sans", Arial, sans-serif; text-align: center; }
    .tabs { display: flex; }
    .tabs button { box-sizing: border-box; width: 44px; height: 15px; border: 1px solid #000; border-width: 1px 2px 2px 1px; border-radius: 2px; font: bold 12px/12px "Liberation Sans", Arial, sans-serif; white-space: nowrap; }
    .tabs button:last-child { font-weight: 400; font-size: 11px; }
  `;

  private mini(label: string) {
    return html`<div class="mini">${icon("app")}<span>${label}</span>
      <button type="button" aria-label="Restore">${glyph("restore")}</button>
      <button type="button" aria-label="Maximize">${glyph("max")}</button>
      <button type="button" aria-label="Close">${glyph("close")}</button></div>`;
  }

  render() {
    return html`
      <header class="title">${icon("app")}
        <h1>dScope Series III - Vervorming vs power aan 4 Ohm</h1>
        <button type="button" aria-label="Minimize"><svg width="10" height="10"><path d="M0 4.5H10" stroke="#fff"></path></svg></button>
        <button type="button" aria-label="Restore"><svg width="11" height="10" fill="none" stroke="#fff"><path d="M.5 2.5H7.5V9.5H.5ZM2.5 .5H8.5L9.5 1.5V8"></path></svg></button>
        <button type="button" aria-label="Close"><svg width="11" height="11" stroke="#fff"><path d="M.5 .5L10.5 10.5M10.5 .5L.5 10.5"></path></svg></button>
      </header>
      <svg class="pointer" width="12" height="19" viewBox="0 0 12 19" aria-hidden="true"><path d="M.5 .5V15.5L4 12.5L6.5 18L9 17L6.5 11.5H11.5Z" fill="#fff" stroke="#000"></path></svg>
      <nav class="menu">${["File", "Edit", "View", "Inputs/Outputs", "Generator", "Analyzer", "Sweeps/Regulation", "Automation", "Utility", "Window", "Help"].map(
        (m) => html`<button type="button">${m}</button>`)}</nav>
      <div class="bar"><tool-strip .groups=${MAIN_TOOLS}></tool-strip></div>
      <div class="pages">${["Default", "Setup Wizard", "Sweep Setup", "Multitone", "Digital I/O", "Applications", "Quick Tour"].map(
        (m) => html`<button type="button">${m}</button>`)}</div>

      <main class="desk">
        <section class="win"><div class="frame">
          <div class="caption">${icon("trace")}<h2>Trace window</h2>
            <button type="button" aria-label="Minimize">${glyph("min")}</button>
            <button type="button" aria-label="Maximize">${glyph("max")}</button>
            <button type="button" class="close" aria-label="Close">${glyph("close")}</button>
          </div>
          <div class="bar"><tool-strip .groups=${TRACE_TOOLS}></tool-strip></div>
          <div class="body"><div class="well"><trace-plot></trace-plot></div><trace-list></trace-list></div>
          <div class="gap"></div>
          <div class="bar"><div class="edit">
            <label class="axis" for="x">X</label><input id="x" class="dark" readonly value="292.55 (r)" />
            <div class="combo"><select aria-label="X unit"><option>W</option></select><span></span></div>
            <label class="axis" for="y">Y</label><input id="y" class="dark" readonly value="2.46847 (r)" />
            <div class="combo"><select aria-label="Y unit"><option>%</option></select><span></span></div>
            <i class="rule"></i>
            <label class="check"><input type="checkbox" checked />Relative</label>
            <i class="rule"></i>
            <tool-strip .groups=${CURSOR_TOOLS}></tool-strip>
          </div></div>
          <div class="bar"><div class="edit">
            <input class="chip" readonly aria-label="Mark colour" />
            <input class="note" aria-label="Mark text" />
            <i class="rule"></i>
            <tool-strip .groups=${MARK_TOOLS}></tool-strip>
          </div></div>
          <div class="foot"></div>
        </div></section>
        <div class="minis">${this.mini("An...")}${this.mini("Sw...")}</div>
      </main>

      <footer class="status">
        <p>For Help, press F1</p>
        <span class="cell w16"><svg width="14" height="15" viewBox="0 0 16 17" shape-rendering="crispEdges">${gauge}${stroke("M1 11.5H14M1 14.5H15M12 12L15 14.5L12 17", "#000")}</svg></span>
        <span class="cell w16"><svg width="14" height="15" viewBox="0 0 16 17" shape-rendering="crispEdges">${fill("M.5 .5H15.5V9.5H.5Z", "#fff", "#000")}${word("100", 8, 8, 8, "#000", true)}${stroke("M1 11.5H14M1 14.5H15M12 12L15 14.5L12 17", "#000")}</svg></span>
        <span class="cell w40 small">S/card<svg width="14" height="5"><path d="M0 2.5H13M10 0L13 2.5L10 5" fill="none" stroke="#808080"></path></svg></span>
        <span class="cell w16"><svg width="12" height="9"><path d="M0 3H6V0L12 4.5L6 9V6H0Z"></path></svg></span>
        <span class="cell w54">Bal/unbal</span>
        <span class="cell w50 hot">XLR</span>
        <span class="cell rate hot">48k<br />16</span>
        <span class="cell w16 hot cs">CS</span>
        <span class="cell w54 hot"></span>
        <span class="cell w54"></span>
        <div class="tabs">${[1, 2, 3, 4, 5].map((n) => html`<button type="button">Page ${n}</button>`)}</div>
      </footer>`;
  }
}
